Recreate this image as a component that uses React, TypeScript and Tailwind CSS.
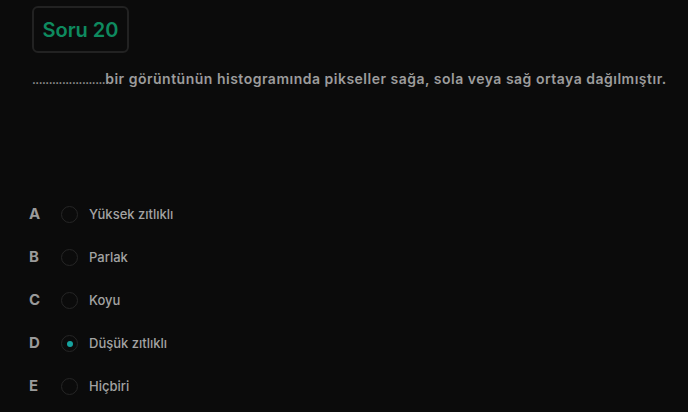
const options = [
  { key: "A", label: "Yüksek zıtlıklı" },
  { key: "B", label: "Parlak" },
  { key: "C", label: "Koyu" },
  { key: "D", label: "Düşük zıtlıklı", selected: true },
  { key: "E", label: "Hiçbiri" },
];

export default function App() {
  return (
    <div
      className="min-h-screen bg-[#0b0b0b] px-8 pt-1.5"
      style={{ fontFamily: "Inter, 'Noto Sans', sans-serif" }}
    >
      <div className="inline-flex h-[47px] w-[97px] items-center justify-center rounded-md border-2 border-[#222222]">
        <span className="text-[20px] font-semibold text-[#0e8a5f]">Soru 20</span>
      </div>
      <p className="mt-[15px] whitespace-nowrap text-[14px] font-semibold tracking-[0.5px] text-[#9c9c9c]">
        <span className="text-[12px] tracking-[-0.5px]">......................</span>
        bir görüntünün histogramında pikseller sağa, sola veya sağ ortaya dağılmıştır.
      </p>
      <div className="mt-[104px] flex flex-col">
        {options.map((o) => (
          <div key={o.key} className="flex h-[43px] items-center">
            <span className="-ml-[3px] w-[29px] text-[15px] font-bold text-[#9a9a9a]">{o.key}</span>
            <span className="ml-[3px] flex h-[17px] w-[17px] items-center justify-center rounded-full border border-[#262626]">
              {o.selected && <span className="h-[6px] w-[6px] rounded-full bg-[#16a39f]" />}
            </span>
            <span className="ml-[11px] text-[13px] font-medium text-[#a3a3a3]">{o.label}</span>
          </div>
        ))}
      </div>
    </div>
  );
}
